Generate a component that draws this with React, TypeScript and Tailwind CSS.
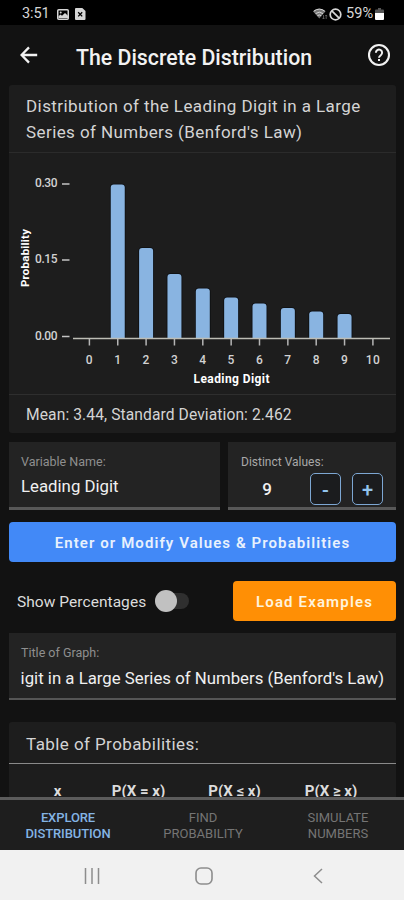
import { useState } from "react";

const bars = [
  { x: 1, top: 184.5 },
  { x: 2, top: 248 },
  { x: 3, top: 274 },
  { x: 4, top: 288.5 },
  { x: 5, top: 297.5 },
  { x: 6, top: 303.5 },
  { x: 7, top: 308 },
  { x: 8, top: 311.5 },
  { x: 9, top: 314 },
];

const yTicks = [
  { label: "0.30", y: 184 },
  { label: "0.15", y: 260 },
  { label: "0.00", y: 336.5 },
];

const xAt = (n: number) => 89.4 + n * 28.35;

function StatusBar() {
  return (
    <div className="flex h-[25px] items-center justify-between bg-black pt-[3px] pr-5 pl-[22px] text-[#d6d6d6]">
      <div className="flex items-center">
        <span className="w-[35px] text-[14.5px] leading-none tracking-[-0.1px]">3:51</span>
        <svg width="12" height="11" viewBox="0 0 12 11" className="shrink-0">
          <rect x="0.75" y="0.75" width="10.5" height="9.5" rx="1" fill="none" stroke="currentColor" strokeWidth="1.5" />
          <circle cx="3.7" cy="3.6" r="1" fill="currentColor" />
          <path d="M1.5 9V7.3l2-1.8 1.5 1.3L8 4l3 2.8V9z" fill="currentColor" />
        </svg>
        <svg width="11" height="12" viewBox="0 0 11 12" className="ml-[6px] shrink-0">
          <path d="M1 0h6.3L10.5 3v8a1 1 0 0 1-1 1H1a1 1 0 0 1-1-1V1a1 1 0 0 1 1-1z" fill="currentColor" />
          <path d="M3.2 4.2l4 4.2M7.2 4.2l-4 4.2" stroke="#000" strokeWidth="1.3" />
        </svg>
      </div>
      <div className="flex items-center">
        <svg width="15" height="12" viewBox="0 0 15 12" className="shrink-0">
          <path d="M0 3.2a9.6 9.6 0 0 1 12.6 0L6.3 10.6z" fill="#777" />
          <path d="M0.8 3.2a9 9 0 0 1 11 0M2.6 5.6a6 6 0 0 1 7.4 0M4.4 7.7a3 3 0 0 1 3.8 0" fill="none" stroke="currentColor" strokeWidth="1" />
          <path d="M10.5 7v4M9.3 9.8l1.2 1.2 1.2-1.2M13.2 11V7M12.2 8.2l1-1.2 1 1.2" fill="none" stroke="#666" strokeWidth="0.8" />
        </svg>
        <svg width="13" height="13" viewBox="0 0 13 13" className="ml-[1px] shrink-0">
          <circle cx="6.5" cy="6.5" r="5.3" fill="none" stroke="currentColor" strokeWidth="1.7" />
          <path d="M2.8 2.8l7.4 7.4" stroke="currentColor" strokeWidth="1.7" />
        </svg>
        <span className="ml-[4px] text-[14.5px] leading-none">59%</span>
        <svg width="9" height="12" viewBox="0 0 9 12" className="ml-[2px] shrink-0">
          <path d="M3 0h3v1.5h2a1 1 0 0 1 1 1V6H0V2.5a1 1 0 0 1 1-1h2z" fill="#555" />
          <path d="M0 5h9v6a1 1 0 0 1-1 1H1a1 1 0 0 1-1-1z" fill="#fff" />
        </svg>
      </div>
    </div>
  );
}

function Header() {
  return (
    <header className="flex h-[60px] items-center pr-[13px] pl-[20px] text-[#f2f2f2]">
      <svg width="18" height="18" viewBox="0 0 18 18" className="shrink-0" fill="none" stroke="currentColor" strokeWidth="2.3">
        <path d="M17.2 9H1.8M9 1.4L1.5 9L9 16.6" />
      </svg>
      <h1 className="ml-[38px] pt-[5px] text-[21.3px] leading-none font-medium whitespace-nowrap">
        The Discrete Distribution
      </h1>
      <svg width="24" height="24" viewBox="0 0 24 24" className="ml-auto shrink-0">
        <circle cx="12" cy="12" r="10" fill="none" stroke="currentColor" strokeWidth="2.1" />
        <path d="M8.9 9.8a3.1 3.1 0 1 1 4.9 2.4c-1.1.8-1.8 1.3-1.8 2.6" fill="none" stroke="currentColor" strokeWidth="2" />
        <rect x="11" y="16" width="2" height="2" fill="currentColor" />
      </svg>
    </header>
  );
}

function Chart() {
  return (
    <svg width="387" height="241" viewBox="9 153 387 241" className="block">
      <g fill="#d2d2d2" fontSize="12">
        {yTicks.map((t) => (
          <g key={t.label}>
            <text x="35" y={t.y + 3} textLength="22.5" fontWeight="500">{t.label}</text>
            <path d={`M62 ${t.y}h7.5`} stroke="#c4c4c4" strokeWidth="1.5" />
          </g>
        ))}
        {Array.from({ length: 11 }, (_, n) => (
          <g key={n}>
            <path d={`M${xAt(n)} 338v7.5`} stroke="#b5b5b5" strokeWidth="1.5" />
            <text x={xAt(n)} y="364.4" textAnchor="middle" fontWeight="500" letterSpacing="0.3">{n}</text>
          </g>
        ))}
      </g>
      {bars.map((b) => (
        <path
          key={b.x}
          d={`M${xAt(b.x) - 7} 338V${b.top + 3}q0-3 3-3h8q3 0 3 3V338z`}
          fill="#89b4e1"
          stroke="#0d0f12"
          strokeWidth="1.6"
          paintOrder="stroke"
        />
      ))}
      <path d="M73 338.5H390" stroke="#bdbdb5" strokeWidth="1.5" />
      <text x="193.5" y="382.8" fontSize="12" fontWeight="700" fill="#fff" textLength="76">Leading Digit</text>
      <text x="0" y="0" transform="translate(28.5 287) rotate(-90)" fontSize="11.5" fontWeight="700" fill="#fff" textLength="58">
        Probability
      </text>
    </svg>
  );
}

function StepButton({ label, onClick }: { label: string; onClick: () => void }) {
  return (
    <button
      onClick={onClick}
      className="flex h-[32px] w-[31px] items-center justify-center rounded-[5px] border-[1.5px] border-[#7da7d3] bg-[#1b1c1e] pt-[2px] text-[20px] leading-none font-medium text-[#93c5ee]"
    >
      {label}
    </button>
  );
}

export default function App() {
  const [count, setCount] = useState(9);
  const [percent, setPercent] = useState(false);

  return (
    <div className="flex h-[900px] w-[404px] flex-col overflow-hidden bg-[#121212] font-['Roboto',sans-serif] text-[#dcdcdc]">
      <StatusBar />
      <Header />

      <main className="min-h-0 flex-1 overflow-hidden pr-[8px] pl-[9px]">
        <section className="h-[348px] rounded-[3px] bg-[#1d1d1d]">
          <h2 className="h-[68px] border-b border-[#2b2b2b] pt-[9px] pl-[17px] text-[17px] leading-[25.5px] tracking-[0.42px] whitespace-nowrap text-[#d4d4d4]">
            Distribution of the Leading Digit in a Large
            <br />
            Series of Numbers (Benford's Law)
          </h2>
          <Chart />
          <p className="flex h-[39px] items-center border-t border-[#2e2e2e] pt-[4px] pl-[17px] text-[15.6px] tracking-[0.1px] text-[#d4d4d4]">
            Mean: 3.44, Standard Deviation: 2.462
          </p>
        </section>

        <div className="mt-[9px] flex h-[68px] gap-2">
          <div className="w-[211px] border-b-[3px] border-[#585858] bg-[#232323] pt-[12px] pl-[12px]">
            <div className="text-[12.5px] leading-[15px] text-[#8f8f8f]">Variable Name:</div>
            <div className="mt-[7px] text-[16.8px] leading-5 text-[#f0f0f0]">Leading Digit</div>
          </div>
          <div className="flex-1 border-b-[3px] border-[#585858] bg-[#232323] pt-[13px] pl-[13px]">
            <div className="text-[12px] leading-[15px] text-[#a8a8a8]">Distinct Values:</div>
            <div className="mt-[3px] flex items-center">
              <span className="w-[52px] pt-[2px] text-center text-[17px] font-medium text-[#f0f0f0]">{count}</span>
              <div className="ml-[17px] flex gap-[11px]">
                <StepButton label="-" onClick={() => setCount(count - 1)} />
                <StepButton label="+" onClick={() => setCount(count + 1)} />
              </div>
            </div>
          </div>
        </div>

        <button className="mt-[12px] flex h-[40px] w-full items-center justify-center rounded-[4px] bg-[#4289f7] pt-[3px] text-[15px] font-semibold tracking-[1.08px] whitespace-nowrap text-[#e8f1fd]">
          Enter or Modify Values &amp; Probabilities
        </button>

        <div className="mt-[19px] flex h-[40px] items-center justify-between pl-[8px]">
          <div className="flex items-center">
            <span className="w-[138px] pt-[3px] text-[15.5px] tracking-[0.05px] whitespace-nowrap">Show Percentages</span>
            <button
              role="switch"
              aria-checked={percent}
              aria-label="Show Percentages"
              onClick={() => setPercent(!percent)}
              className="flex h-[16px] w-[34px] items-center rounded-full bg-[#2f2f2f]"
            >
              <span className="h-[22px] w-[22px] shrink-0 rounded-full bg-[#c1c1c1]" />
            </button>
          </div>
          <button className="h-[40px] w-[163px] rounded-[4px] bg-[#ff8f05] pt-[2px] text-[15px] font-semibold tracking-[1.15px] whitespace-nowrap text-[#fff3dc]">
            Load Examples
          </button>
        </div>

        <div className="mt-[12px] h-[67px] border-b-2 border-[#555] bg-[#232323] pt-[12px] pr-[12px] pl-[12px]">
          <div className="text-[12.5px] leading-[15px] text-[#8f8f8f]">Title of Graph:</div>
          <div className="mt-[7px] flex justify-end overflow-hidden text-[16.8px] leading-[22px] whitespace-nowrap text-[#f0f0f0]">
            Digit in a Large Series of Numbers (Benford's Law)
          </div>
        </div>

        <section className="mt-[22px] rounded-t-[3px] bg-[#1d1d1d]">
          <h2 className="flex h-[42px] items-center border-b border-[#8a8a8a] pt-[4px] pl-[17px] text-[17px] tracking-[0.42px] text-[#d4d4d4]">
            Table of Probabilities:
          </h2>
          <div className="grid h-[60px] grid-cols-[81px_81px_111px_82px] pt-[17px] pl-2 text-center text-[15px] leading-5 font-bold">
            <span>x</span>
            <span>P(X = x)</span>
            <span>P(X ≤ x)</span>
            <span>P(X ≥ x)</span>
          </div>
        </section>
      </main>

      <nav className="flex h-[53px] shrink-0 items-start justify-between border-t-[3px] border-[#5c5c5c] bg-[#1e1e1e] pt-[10px] text-[13px] leading-[15.5px] text-[#757575]">
        <button className="w-[136px] text-center font-medium tracking-[-0.1px] text-[#84b4e4]">EXPLORE<br />DISTRIBUTION</button>
        <button className="w-[134px] text-center">FIND<br />PROBABILITY</button>
        <button className="w-[134px] pl-[2px] text-center">SIMULATE<br />NUMBERS</button>
      </nav>

      <footer className="flex h-[50px] shrink-0 items-center bg-[#f1f1f1] pt-[2px] pl-[84px]">
        <svg width="16" height="16" viewBox="0 0 16 16" stroke="#8d8d8d" strokeWidth="1.5">
          <path d="M1.5 0v16M8 0v16M14.5 0v16" />
        </svg>
        <svg width="18" height="18" viewBox="0 0 18 18" className="ml-[95px]" fill="none" stroke="#8d8d8d" strokeWidth="1.6">
          <rect x="1" y="1" width="16" height="16" rx="5" />
        </svg>
        <svg width="10" height="16" viewBox="0 0 10 16" className="ml-[100px]" fill="none" stroke="#8d8d8d" strokeWidth="1.5">
          <path d="M9 1L1.5 8L9 15" />
        </svg>
      </footer>
    </div>
  );
}
